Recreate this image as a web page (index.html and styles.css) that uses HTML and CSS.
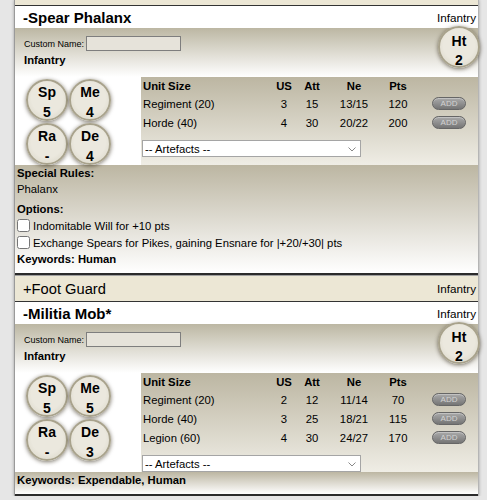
FILE: index.html
```html
<!DOCTYPE html>
<html lang="en">

<head>
    <meta charset="UTF-8">
    <meta name="viewport" content="width=device-width, initial-scale=1.0">
    <title>Army List</title>
    <link rel="stylesheet" href="styles.css">
</head>

<body>
    <div class="roster">
        <div class="group-tail"></div>

        <div class="unit">
            <div class="unit-head">
                <span class="unit-name">-Spear Phalanx</span>
                <span class="unit-type">Infantry</span>
            </div>
            <div class="unit-top">
                <div class="unit-id">
                    <div class="custom"><label for="cn1">Custom Name:</label><input type="text" id="cn1"></div>
                    <div class="type">Infantry</div>
                </div>
                <div class="stat ht">Ht<br>2</div>
            </div>
            <div class="unit-main">
                <div class="stats">
                    <div class="stat">Sp<br>5</div>
                    <div class="stat">Me<br>4</div>
                    <div class="stat">Ra<br>-</div>
                    <div class="stat">De<br>4</div>
                </div>
                <div class="sizes">
                    <table>
                        <colgroup>
                            <col class="c-name"><col class="c-us"><col class="c-att"><col class="c-ne"><col class="c-pts"><col>
                        </colgroup>
                        <thead>
                            <tr><th class="name">Unit Size</th><th>US</th><th>Att</th><th>Ne</th><th>Pts</th><th></th></tr>
                        </thead>
                        <tbody>
                            <tr><td class="name">Regiment (20)</td><td>3</td><td>15</td><td>13/15</td><td>120</td><td><button class="add" disabled>ADD</button></td></tr>
                            <tr><td class="name">Horde (40)</td><td>4</td><td>30</td><td>20/22</td><td>200</td><td><button class="add" disabled>ADD</button></td></tr>
                        </tbody>
                    </table>
                    <div class="pick">
                        <select class="artefacts"><option>-- Artefacts --</option></select>
                        <svg class="chev" width="8" height="5" viewBox="0 0 8 5"><path d="M0.5 0.5 L4 4 L7.5 0.5" fill="none" stroke="#888" stroke-width="1"/></svg>
                    </div>
                </div>
            </div>
            <div class="rules">
                <div class="label">Special Rules:</div>
                <div>Phalanx</div>
                <div class="label options">Options:</div>
                <label class="opt"><input type="checkbox">Indomitable Will for +10 pts</label>
                <label class="opt"><input type="checkbox">Exchange Spears for Pikes, gaining Ensnare for |+20/+30| pts</label>
                <div class="label">Keywords: Human</div>
            </div>
        </div>

        <div class="group-head">
            <span class="group-name">+Foot Guard</span>
            <span class="unit-type">Infantry</span>
        </div>

        <div class="unit">
            <div class="unit-head">
                <span class="unit-name">-Militia Mob*</span>
                <span class="unit-type">Infantry</span>
            </div>
            <div class="unit-top">
                <div class="unit-id">
                    <div class="custom"><label for="cn2">Custom Name:</label><input type="text" id="cn2"></div>
                    <div class="type">Infantry</div>
                </div>
                <div class="stat ht">Ht<br>2</div>
            </div>
            <div class="unit-main">
                <div class="stats">
                    <div class="stat">Sp<br>5</div>
                    <div class="stat">Me<br>5</div>
                    <div class="stat">Ra<br>-</div>
                    <div class="stat">De<br>3</div>
                </div>
                <div class="sizes">
                    <table>
                        <colgroup>
                            <col class="c-name"><col class="c-us"><col class="c-att"><col class="c-ne"><col class="c-pts"><col>
                        </colgroup>
                        <thead>
                            <tr><th class="name">Unit Size</th><th>US</th><th>Att</th><th>Ne</th><th>Pts</th><th></th></tr>
                        </thead>
                        <tbody>
                            <tr><td class="name">Regiment (20)</td><td>2</td><td>12</td><td>11/14</td><td>70</td><td><button class="add" disabled>ADD</button></td></tr>
                            <tr><td class="name">Horde (40)</td><td>3</td><td>25</td><td>18/21</td><td>115</td><td><button class="add" disabled>ADD</button></td></tr>
                            <tr><td class="name">Legion (60)</td><td>4</td><td>30</td><td>24/27</td><td>170</td><td><button class="add" disabled>ADD</button></td></tr>
                        </tbody>
                    </table>
                    <div class="pick">
                        <select class="artefacts"><option>-- Artefacts --</option></select>
                        <svg class="chev" width="8" height="5" viewBox="0 0 8 5"><path d="M0.5 0.5 L4 4 L7.5 0.5" fill="none" stroke="#888" stroke-width="1"/></svg>
                    </div>
                </div>
            </div>
            <div class="rules">
                <div class="label">Keywords: Expendable, Human</div>
            </div>
        </div>
    </div>
</body>

</html>
```

FILE: styles.css
```css
body {
    margin: 0;
    background: #e6e6e6;
    font-family: "Liberation Sans", Arial, sans-serif;
    font-size: 11.3px;
    color: #000;
}

.roster {
    margin-left: 14px;
    width: 463px;
    background: #fff;
    border-left: 1px solid #9a9a9a;
    border-right: 1px solid #b5b5b5;
    box-shadow: 0 0 3px rgba(0, 0, 0, 0.3);
}

.group-tail {
    height: 5px;
    background: #ece7d5;
    border-bottom: 1px solid #333;
}

.unit {
    border-bottom: 2px solid #2b2b2b;
}

.unit-head,
.group-head {
    display: flex;
    justify-content: space-between;
    align-items: center;
    padding: 0 2px 0 8px;
}

.unit-head {
    height: 22px;
    background: #fff;
}

.group-head {
    height: 25px;
    background: #ece7d5;
    border-top: 1px solid #a0a0a0;
    border-bottom: 1px solid #333;
}

.unit-name {
    font-weight: bold;
    font-size: 15px;
}

.group-name {
    font-size: 14.7px;
}

.unit-type {
    font-size: 11.7px;
}

/* name + type + height */
.unit-top {
    display: flex;
    justify-content: space-between;
    height: 49px;
    box-sizing: border-box;
    padding: 8px 0 0 9px;
    background: linear-gradient(#bcb7a3, #fff);
}

.custom {
    display: flex;
    align-items: center;
    height: 15px;
    font-size: 9px;
}

.custom input {
    width: 95px;
    height: 15px;
    box-sizing: border-box;
    margin: 0 0 0 2px;
    padding: 0;
    border: 1px solid #7e7e7e;
    background: #e6e3da;
}

.type {
    margin-top: 2px;
    line-height: 14px;
    font-weight: bold;
}

.stat {
    width: 42px;
    height: 42px;
    box-sizing: border-box;
    padding-top: 1px;
    border: 2px solid #a8a28c;
    border-radius: 50%;
    background: radial-gradient(circle at 50% 45%, #ebe8de 55%, #d6d2c2 100%);
    box-shadow: 0 1px 4px rgba(40, 30, 10, 0.6);
    text-align: center;
    font-weight: bold;
    font-size: 14px;
    line-height: 20px;
}

.ht {
    margin: -10px -2px 0 0;
    padding-top: 4px;
    line-height: 19px;
}

.unit-main {
    display: flex;
}

.stats {
    display: grid;
    grid-template-columns: 42px 42px;
    grid-auto-rows: 42px;
    column-gap: 1px;
    row-gap: 2px;
    align-content: start;
    width: 126px;
    box-sizing: border-box;
    padding: 2px 0 0 11px;
}

.sizes {
    flex: 1;
    background: linear-gradient(#bcb6a2, #efede5);
}

.sizes table {
    width: 100%;
    table-layout: fixed;
    border-collapse: collapse;
}

.c-name { width: 129px; }
.c-us { width: 28px; }
.c-att { width: 28px; }
.c-ne { width: 56px; }
.c-pts { width: 32px; }

.sizes th,
.sizes td {
    padding: 0;
    height: 19px;
    text-align: center;
}

.sizes th {
    height: 17px;
}

.sizes .name {
    text-align: left;
    padding-left: 2px;
}

.add {
    display: block;
    width: 34px;
    height: 13px;
    margin-left: 18px;
    padding: 0;
    border: 1px solid #666;
    border-radius: 7px;
    background: linear-gradient(#aaa, #757575);
    box-shadow: inset 0 1px 0 rgba(255, 255, 255, 0.3);
    color: #d2d2d2;
    font: 8px "Liberation Sans", Arial, sans-serif;
    line-height: 11px;
}

.pick {
    position: relative;
    width: 219px;
    margin: 8px 0 0 1px;
}

.artefacts {
    display: block;
    width: 219px;
    height: 17px;
    padding: 0 0 0 2px;
    border: 1px solid #a5a5a5;
    border-radius: 0;
    background: #fff;
    color: #000;
    font: 11.3px "Liberation Sans", Arial, sans-serif;
    appearance: none;
}

.chev {
    position: absolute;
    right: 5px;
    top: 7px;
}

.rules {
    padding: 0 0 6px 2px;
    line-height: 16px;
    background: linear-gradient(#bcb6a2, #fff);
}

.rules .label {
    font-weight: bold;
}

.rules .options {
    margin-top: 4px;
}

.opt {
    display: flex;
    align-items: center;
    height: 17px;
}

.opt input {
    width: 13px;
    height: 13px;
    margin: 0 3px 0 0;
}
```
